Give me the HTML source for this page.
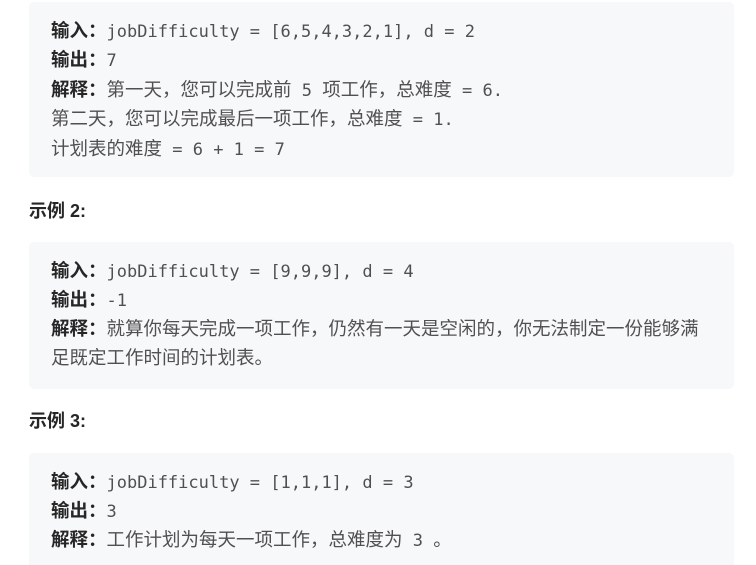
<!DOCTYPE html>
<html><head><meta charset="utf-8"><style>
body{margin:0;width:756px;height:565px;background:#fff;position:relative;overflow:hidden;font-family:"DejaVu Sans Mono","Noto Sans CJK SC",monospace;}
.box{position:absolute;left:29px;width:705px;background:#f7f8fa;border-radius:5px;}
.l{position:absolute;left:51px;font-size:17px;line-height:20px;color:rgba(38,38,38,.8);white-space:nowrap;}
.l b{color:#262626;font-family:"Noto Sans CJK SC",sans-serif;font-size:18.5px;}
.c{font-family:"Noto Sans CJK SC",sans-serif;font-size:18.5px;}
.h{position:absolute;left:29px;font-family:"Liberation Sans","Noto Sans CJK SC",sans-serif;font-weight:bold;font-size:18px;color:#262626;line-height:20px;}
</style></head><body>
<div class="box" style="top:2px;height:175px"></div>
<div class="box" style="top:242px;height:147px"></div>
<div class="box" style="top:453px;height:112px;border-radius:5px 5px 0 0"></div>

<div class="l" style="top:20px"><b>输入：</b>jobDifficulty = [6,5,4,3,2,1], d = 2</div>
<div class="l" style="top:49px"><b>输出：</b>7</div>
<div class="l" style="top:79px"><b>解释：</b><span class="c">第一天，您可以完成前</span> 5 <span class="c">项工作，总难度</span> = 6.</div>
<div class="l" style="top:108px"><span class="c">第二天，您可以完成最后一项工作，总难度</span> = 1.</div>
<div class="l" style="top:138px"><span class="c">计划表的难度</span> = 6 + 1 = 7</div>

<div class="h" style="top:201px">示例 2:</div>
<div class="l" style="top:260px"><b>输入：</b>jobDifficulty = [9,9,9], d = 4</div>
<div class="l" style="top:289px"><b>输出：</b>-1</div>
<div class="l" style="top:318px"><b>解释：</b><span class="c">就算你每天完成一项工作，仍然有一天是空闲的，你无法制定一份能够满</span></div>
<div class="l" style="top:347px"><span class="c">足既定工作时间的计划表。</span></div>

<div class="h" style="top:411px">示例 3:</div>
<div class="l" style="top:471px"><b>输入：</b>jobDifficulty = [1,1,1], d = 3</div>
<div class="l" style="top:500px"><b>输出：</b>3</div>
<div class="l" style="top:529px"><b>解释：</b><span class="c">工作计划为每天一项工作，总难度为</span> 3 <span class="c">。</span></div>
</body></html>
